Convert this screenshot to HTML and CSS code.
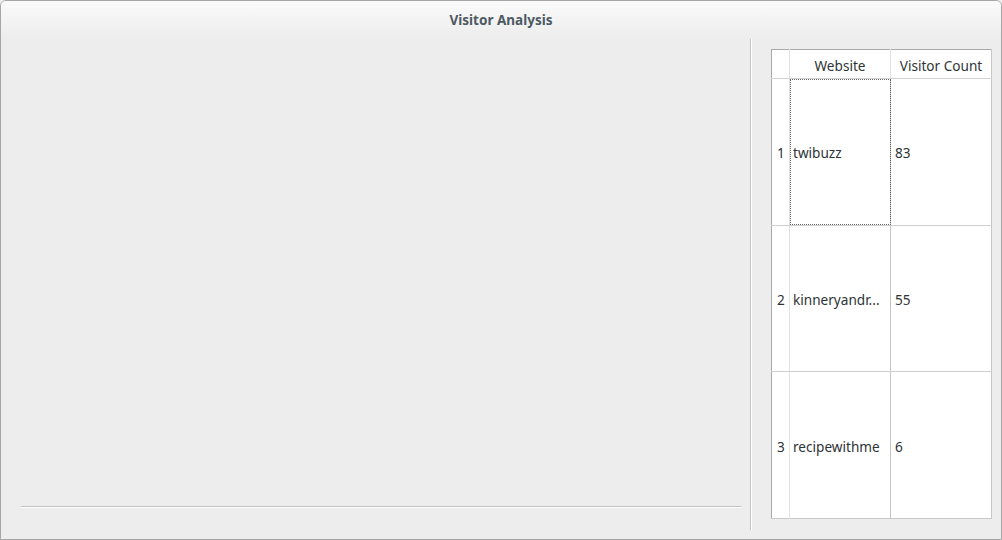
FILE: index.html
```html
<!DOCTYPE html>
<html>
<head>
<meta charset="utf-8">
<link rel="stylesheet" href="styles.css">
</head>
<body>
<div class="window">
  <div class="titlebar">Visitor Analysis</div>
  <div class="content">
    <div class="chart-pane">
      <div class="chart-axis"></div>
    </div>
    <div class="vsep"></div>
    <div class="table-pane">
      <table class="grid">
        <colgroup>
          <col class="c-num">
          <col class="c-site">
          <col class="c-count">
        </colgroup>
        <thead>
          <tr><th class="num"></th><th>Website</th><th class="last">Visitor Count</th></tr>
        </thead>
        <tbody>
          <tr><td class="num">1</td><td class="site focus">twibuzz</td><td class="last">83</td></tr>
          <tr><td class="num">2</td><td class="site">kinneryandr...</td><td class="last">55</td></tr>
          <tr class="lastrow"><td class="num">3</td><td class="site">recipewithme</td><td class="last">6</td></tr>
        </tbody>
      </table>
    </div>
  </div>
</div>
</body>
</html>
```

FILE: styles.css
```css
html, body {
  margin: 0;
  padding: 0;
  background: #ededed;
}
.window {
  width: 1002px;
  height: 540px;
  box-sizing: border-box;
  border: 1px solid #a6a6a6;
  border-radius: 6px 6px 0 0;
  background: #ededed;
  display: flex;
  flex-direction: column;
  overflow: hidden;
  font-family: "Noto Sans", "DejaVu Sans", sans-serif;
}
.titlebar {
  height: 37px;
  box-sizing: border-box;
  padding-top: 2px;
  flex: none;
  background: linear-gradient(#fafafa, #ededed);
  color: #4c5a63;
  font-size: 13.5px;
  font-weight: 700;
  text-align: center;
  line-height: 35px;
}
.content {
  flex: 1;
  display: flex;
  min-height: 0;
}
.chart-pane {
  width: 748px;
  flex: none;
  box-sizing: border-box;
  padding: 0 8px 31px 20px;
  display: flex;
  flex-direction: column;
  justify-content: flex-end;
}
.chart-axis {
  height: 1px;
  background: #bfbfbf;
  border-bottom: 1px solid #ffffff;
}
.vsep {
  width: 1px;
  flex: none;
  margin: 1px 0 9px 1px;
  background: #c4c4c4;
  border-right: 1px solid #ffffff;
}
.table-pane {
  flex: 1;
  box-sizing: border-box;
  padding: 11px 0 20px 19px;
}
.grid {
  table-layout: fixed;
  border-collapse: collapse;
  width: 221px;
  height: 470px;
  background: #ffffff;
  border-top: 1px solid #a8a8a8;
  border-left: 1px solid #a8a8a8;
  border-right: 1px solid #c8c8c8;
  border-bottom: 1px solid #c8c8c8;
  font-size: 13.6px;
  color: #2e3436;
}
.c-num { width: 18px; }
.c-site { width: 101px; }
.c-count { width: 101px; }
.grid th {
  height: 26px;
  padding: 2px 0 0 0;
  font-weight: 400;
  text-align: center;
  border-bottom: 1px solid #d2d2d2;
  border-right: 1px solid #e2e2e2;
}
.grid th.last { border-right: none; }
.grid td {
  padding: 2px 3px 0 4px;
  text-align: left;
  vertical-align: middle;
  border-bottom: 1px solid #cfcfcf;
  border-right: 1px solid #c4c4c4;
  white-space: nowrap;
  overflow: hidden;
}
.grid td.site { padding-left: 3px; }
.grid td.num {
  padding: 2px 0 0 5px;
  border-right: 1px solid #e2e2e2;
}
.grid td.last { border-right: none; }
.grid tr.lastrow td { border-bottom: none; }
.grid td.focus {
  outline: 1px dotted #6a6a6a;
  outline-offset: -1px;
}
```
